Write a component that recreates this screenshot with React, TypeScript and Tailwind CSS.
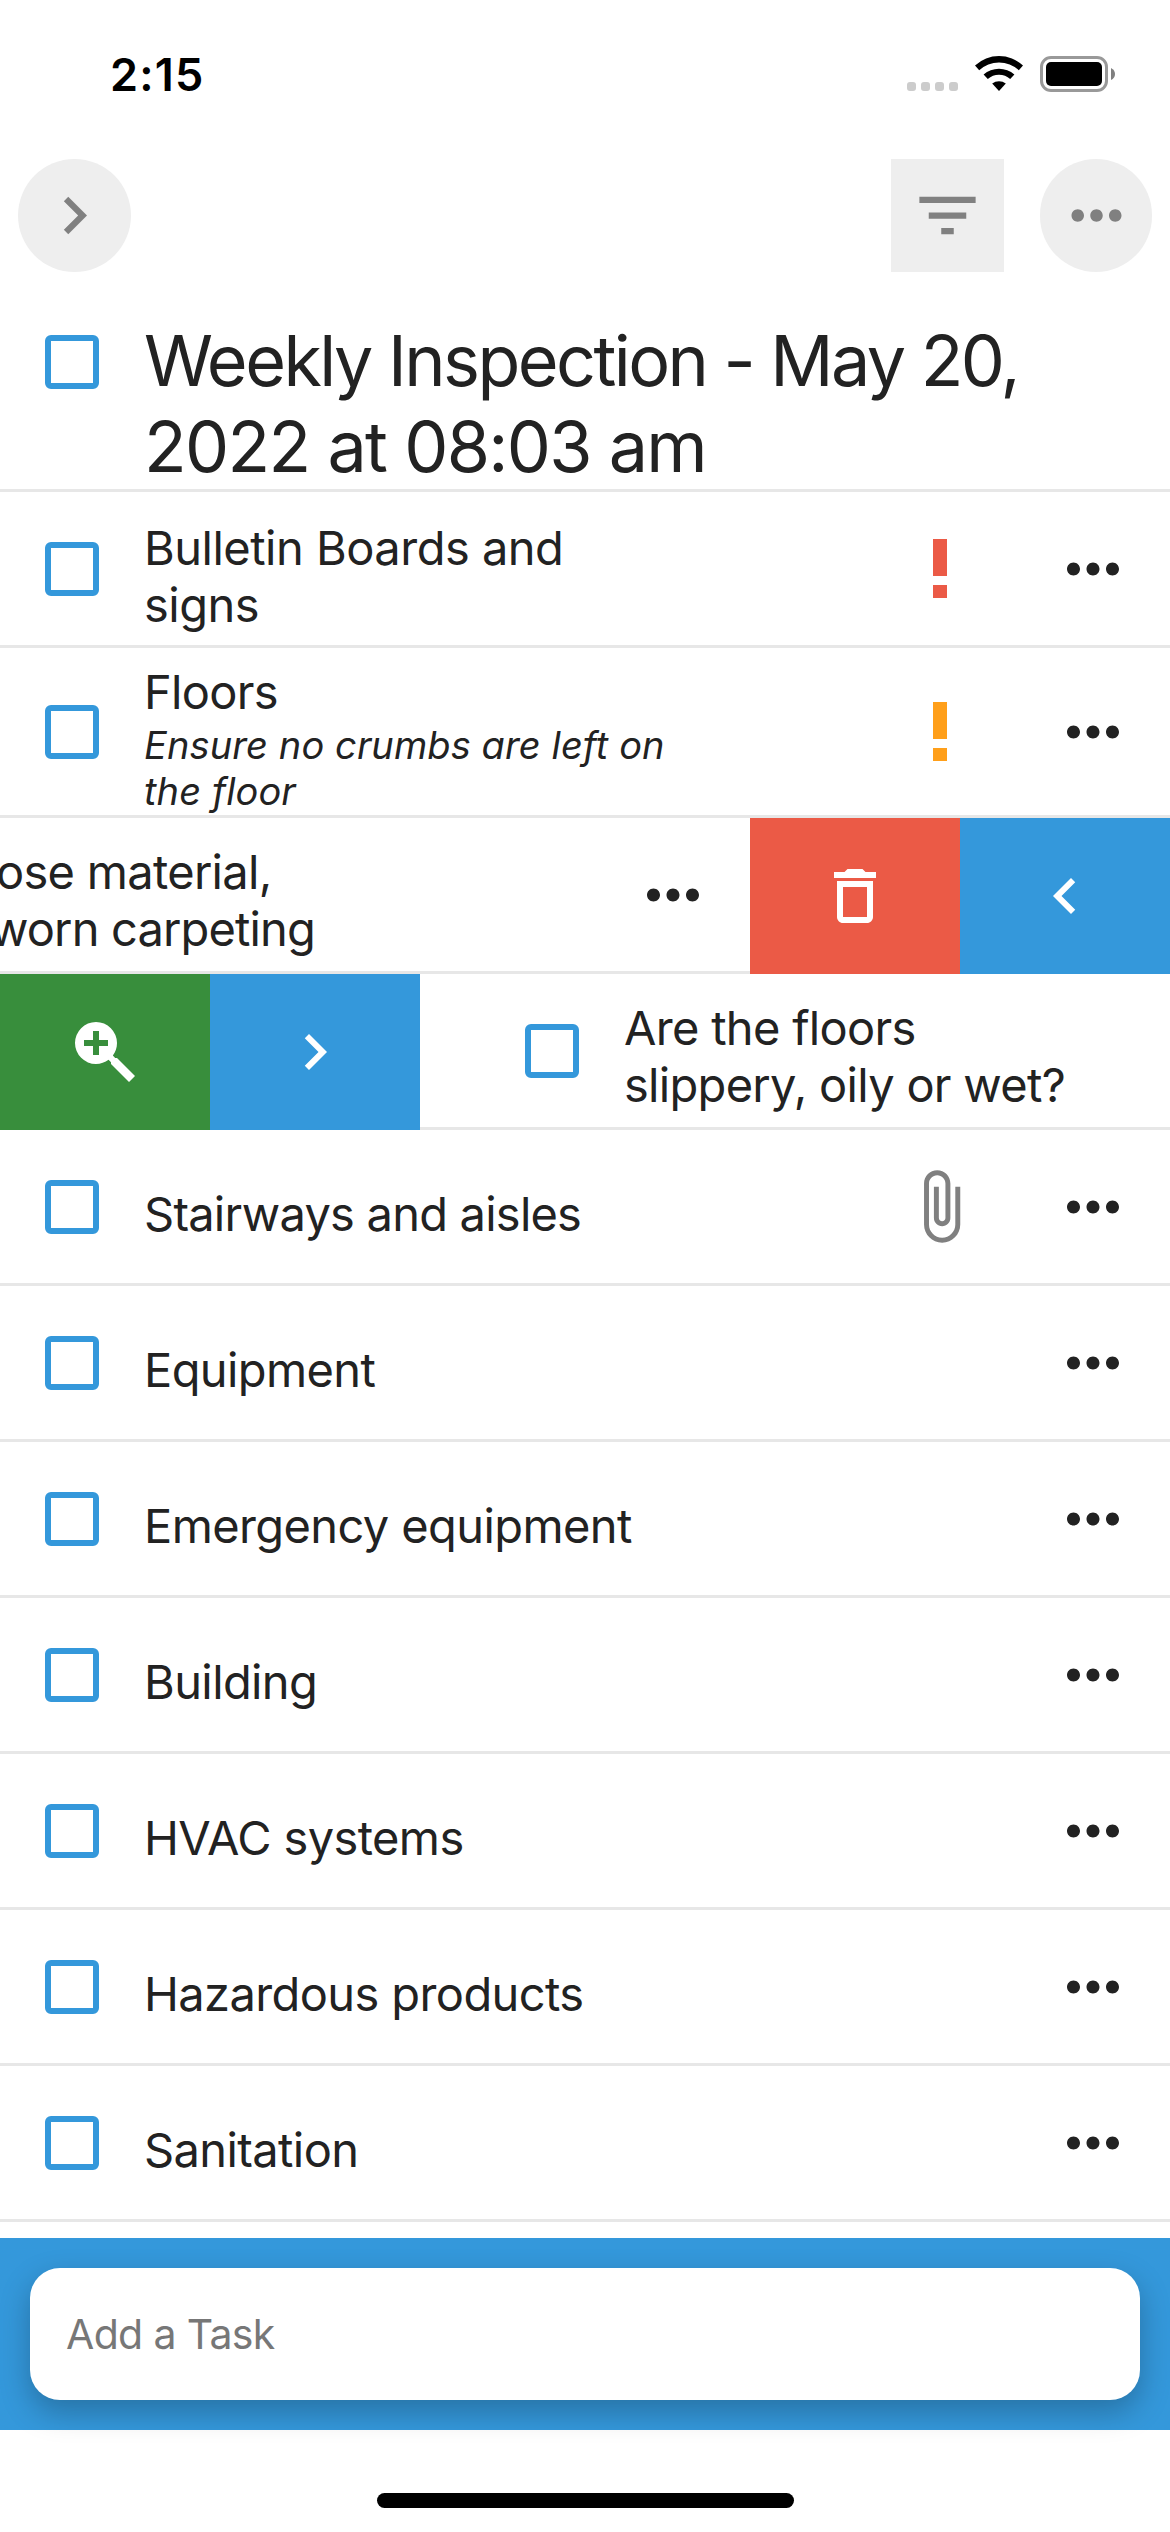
import type { ReactNode } from "react";

function Icon({ d, className }: { d: string; className: string }) {
  return (
    <svg viewBox="0 0 24 24" fill="currentColor" className={`block shrink-0 ${className}`}>
      <path d={d} />
    </svg>
  );
}

const CHEVRON_RIGHT = "M10 6L8.59 7.41 13.17 12l-4.58 4.59L10 18l6-6z";
const CHEVRON_LEFT = "M15.41 7.41L14 6l-6 6 6 6 1.41-1.41L10.83 12z";
const FILTER = "M10 18h4v-2h-4v2zM3 6v2h18V6H3zm3 7h12v-2H6v2z";
const MORE =
  "M6 10c-1.1 0-2 .9-2 2s.9 2 2 2 2-.9 2-2-.9-2-2-2zm12 0c-1.1 0-2 .9-2 2s.9 2 2 2 2-.9 2-2-.9-2-2-2zm-6 0c-1.1 0-2 .9-2 2s.9 2 2 2 2-.9 2-2-.9-2-2-2z";
const TRASH =
  "M6 19c0 1.1.9 2 2 2h8c1.1 0 2-.9 2-2V7H6v12zM8 9h8v10H8V9zm7.5-5l-1-1h-5l-1 1H5v2h14V4h-3.5z";
const MAGNIFY_PLUS =
  "M9,2A7,7 0 0,1 16,9C16,10.57 15.5,12 14.61,13.19L15.41,14H16L22,20L20,22L14,16V15.41L13.19,14.61C12,15.5 10.57,16 9,16A7,7 0 0,1 2,9A7,7 0 0,1 9,2M8,5V8H5V10H8V13H10V10H13V8H10V5H8Z";
const PAPERCLIP =
  "M16.5 6v11.5c0 2.21-1.79 4-4 4s-4-1.79-4-4V5c0-1.38 1.12-2.5 2.5-2.5s2.5 1.12 2.5 2.5v10.5c0 .55-.45 1-1 1s-1-.45-1-1V6H10v9.5c0 1.38 1.12 2.5 2.5 2.5s2.5-1.12 2.5-2.5V5c0-2.21-1.79-4-4-4S7 2.79 7 5v12.5c0 3.04 2.46 5.5 5.5 5.5s5.5-2.46 5.5-5.5V6h-1.5z";

function StatusBar() {
  return (
    <div className="flex h-[159px] items-start justify-between pl-[110px] pr-[55px] pt-[47px]">
      <span className="text-[45px] font-semibold leading-[55px] tracking-[1.2px] text-black">2:15</span>
      <div className="flex pt-2">
        <div className="mr-[17px] flex gap-[5px] pt-[27px]">
          {[0, 1, 2, 3].map((i) => (
            <span key={i} className="size-[9px] rounded-[3px] bg-[#cccccc]" />
          ))}
        </div>
        <svg viewBox="0 0 48 36" className="mr-[17px] block h-9 w-12">
          <path d="M0 10.6A35 35 0 0 1 48 10.6L43.8 15.2A29 29 0 0 0 4.2 15.2Z" />
          <path d="M8.6 19.6A23 23 0 0 1 39.4 19.6L35.2 24.1A16.8 16.8 0 0 0 12.8 24.1Z" />
          <path d="M17.2 28.6A10.6 10.6 0 0 1 30.8 28.6L24 36Z" />
        </svg>
        <div className="mt-px flex items-center">
          <div className="h-9 w-[68px] rounded-[11px] border-[3px] border-[#999999] p-[3px]">
            <div className="h-full w-full rounded-[5px] bg-black" />
          </div>
          <svg viewBox="0 0 4 12" className="ml-[3px] block h-3 w-1" fill="#808080">
            <path d="M0 0Q4 2 4 6T0 12Z" />
          </svg>
        </div>
      </div>
    </div>
  );
}

function Toolbar() {
  return (
    <div className="flex h-[131px] items-start pl-[18px] pr-[18px] text-[#808080]">
      <button className="flex size-[113px] items-center justify-center rounded-full bg-[#eeeeee]">
        <Icon d={CHEVRON_RIGHT} className="size-[75px]" />
      </button>
      <button className="ml-auto flex size-[113px] items-center justify-center bg-[#eeeeee]">
        <Icon d={FILTER} className="size-[75px]" />
      </button>
      <button className="ml-9 flex h-[113px] w-[112px] items-center justify-center rounded-full bg-[#eeeeee]">
        <Icon d={MORE} className="size-[75px]" />
      </button>
    </div>
  );
}

function Checkbox({ className }: { className: string }) {
  return <span className={`block size-[54px] shrink-0 rounded-md border-[6px] border-[#3498db] ${className}`} />;
}

function Priority({ color }: { color: string }) {
  return (
    <span className="flex w-[14px] flex-col gap-[9px]">
      <span className={`h-[37px] ${color}`} />
      <span className={`h-[13px] ${color}`} />
    </span>
  );
}

function TaskRow({
  children,
  badge,
  height = "h-[156px]",
  checkTop = "mt-[50px]",
}: {
  children: ReactNode;
  badge?: ReactNode;
  height?: string;
  checkTop?: string;
}) {
  return (
    <div className={`flex border-b-[3px] border-[#e7e7e7] pl-[45px] pr-[38px] ${height}`}>
      <Checkbox className={checkTop} />
      <div className="ml-[45px] grow whitespace-nowrap">{children}</div>
      <div className="flex w-[114px] items-center justify-center">{badge}</div>
      <div className="ml-[57px] flex items-center text-[#222222]">
        <Icon d={MORE} className="size-[78px]" />
      </div>
    </div>
  );
}

function SwipeAction({ d, color }: { d: string; color: string }) {
  return (
    <button className={`flex h-full w-[210px] shrink-0 items-center justify-center text-white ${color}`}>
      <Icon d={d} className="size-[72px]" />
    </button>
  );
}

const simpleTasks = [
  "Equipment",
  "Emergency equipment",
  "Building",
  "HVAC systems",
  "Hazardous products",
  "Sanitation",
];

export default function App() {
  return (
    <div className="flex h-[2532px] w-[1170px] flex-col overflow-hidden bg-white font-['Inter',sans-serif] text-[47px] leading-[57px] tracking-[-0.7px] text-[#222222]">
      <StatusBar />
      <Toolbar />

      <div className="flex h-[202px] border-b-[3px] border-[#e7e7e7] pl-[45px]">
        <Checkbox className="mt-[45px]" />
        <h1 className="ml-[45px] whitespace-nowrap pt-[28px] text-[70px] leading-[86px]">
          <span className="block tracking-[-2.55px]">Weekly Inspection - May 20,</span>
          <span className="block tracking-[-1.7px]">2022 at 08:03 am</span>
        </h1>
      </div>

      <TaskRow badge={<Priority color="bg-[#eb5a46]" />}>
        <p className="pt-[27px] tracking-[-0.5px]">
          Bulletin Boards and
          <br />
          signs
        </p>
      </TaskRow>

      <TaskRow badge={<Priority color="bg-[#ff9f1a]" />} height="h-[170px]" checkTop="mt-[57px]">
        <p className="pt-[15px]">Floors</p>
        <p className="mt-[2px] text-[38px] italic leading-[46px] tracking-[0.1px]">
          Ensure no crumbs are left on
          <br />
          the floor
        </p>
      </TaskRow>

      <div className="flex h-[156px]">
        <div className="flex w-[750px] border-b-[3px] border-[#e7e7e7] pr-[38px]">
          <p className="grow whitespace-nowrap pt-[25px]">
            <span className="-ml-[4px] block">ose material,</span>
            <span className="-ml-[10px] block tracking-[-0.85px]">worn carpeting</span>
          </p>
          <div className="flex items-center">
            <Icon d={MORE} className="size-[78px]" />
          </div>
        </div>
        <SwipeAction d={TRASH} color="bg-[#eb5a46]" />
        <SwipeAction d={CHEVRON_LEFT} color="bg-[#3498db]" />
      </div>

      <div className="flex h-[156px]">
        <SwipeAction d={MAGNIFY_PLUS} color="bg-[#388e3c]" />
        <SwipeAction d={CHEVRON_RIGHT} color="bg-[#3498db]" />
        <div className="flex grow border-b-[3px] border-[#e7e7e7] pl-[105px]">
          <Checkbox className="mt-[50px]" />
          <p className="ml-[45px] whitespace-nowrap pt-[25px]">
            Are the floors
            <br />
            slippery, oily or wet?
          </p>
        </div>
      </div>

      <TaskRow badge={<Icon d={PAPERCLIP} className="size-[79px] text-[#808080]" />}>
        <p className="pt-[55px] tracking-[-0.77px]">Stairways and aisles</p>
      </TaskRow>

      {simpleTasks.map((task) => (
        <TaskRow key={task}>
          <p className="pt-[55px] tracking-[-0.6px]">{task}</p>
        </TaskRow>
      ))}

      <div className="mt-4 h-[192px] bg-[#3498db] p-[30px]">
        <div className="flex h-[132px] items-center rounded-[30px] bg-white pl-9 shadow-[0_12px_30px_rgba(0,0,0,0.25)]">
          <span className="text-[41px] leading-[50px] tracking-[-0.65px] text-[#777777]">Add a Task</span>
        </div>
      </div>

      <div className="mx-auto mt-[63px] h-[15px] w-[417px] rounded-full bg-black" />
    </div>
  );
}
